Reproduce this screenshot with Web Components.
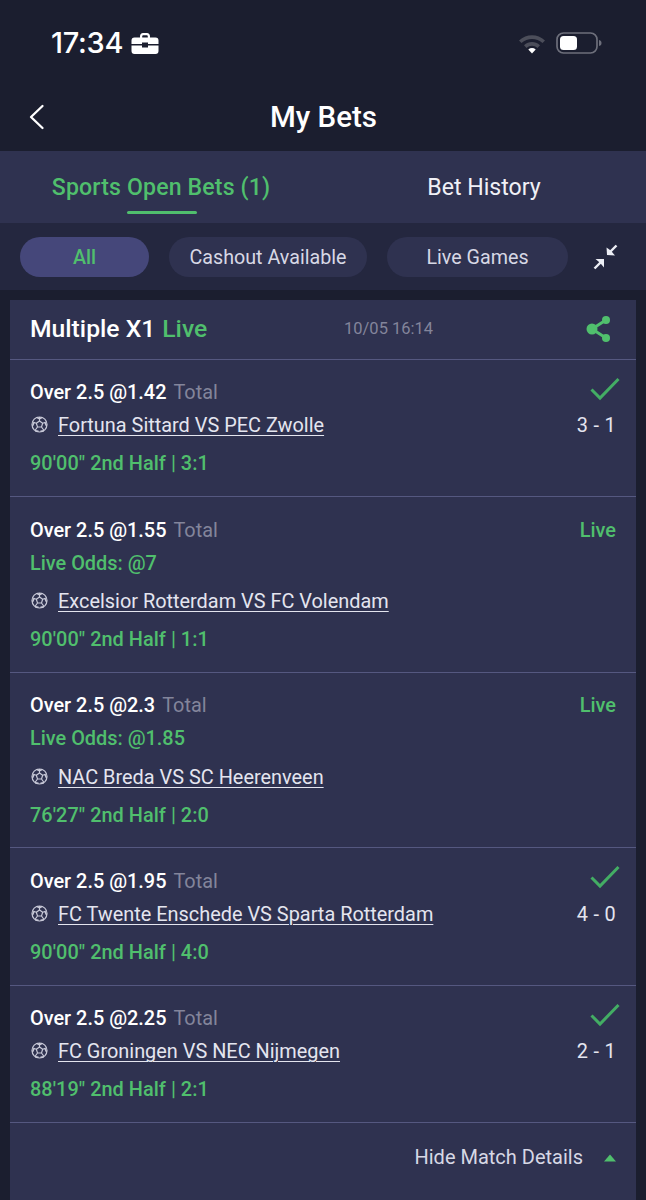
<!DOCTYPE html>
<html><head><meta charset="utf-8">
<style>
html,body{margin:0;padding:0;background:#1b1e2f;font-family:Roboto,"Liberation Sans",sans-serif;}
body{width:646px;height:1200px;overflow:hidden;}
</style></head>
<body>
<template id="t-status"><style>
:host{display:flex;justify-content:space-between;height:151px;box-sizing:border-box;flex-direction:column;background:#1b1e2f;color:#fff}
.top{display:flex;align-items:center;justify-content:space-between;height:38px;margin-top:24px;padding:0 44px 0 51px}
.time{display:flex;align-items:center;gap:8px;font:500 29px/38px Inter,Roboto,sans-serif;letter-spacing:-.3px}
.ind{display:flex;align-items:center;gap:10px}
.nav{display:grid;grid-template-columns:1fr auto 1fr;align-items:center;height:38px;margin-bottom:15px;padding:0 27px 0 28px}
h1{margin:0;font:500 29.500px/38px Roboto,sans-serif}
svg{display:block}
</style>
<div class="top"><div class="time"><span>17:34</span>
<svg width="28" height="23" viewBox="0 0 28 23"><path d="M9 6V4.200C9 2.400 10.200 1 12 1h4c1.800 0 3 1.400 3 3.200V6h-2.200V4.500c0-.800-.500-1.300-1.200-1.300h-3.200c-.700 0-1.200.500-1.200 1.300V6Z" fill="#fff"/><path d="M3.500 5.500h21A3 3 0 0 1 27.500 8.500v3.500H17v-1.500h-6V12H.5V8.500a3 3 0 0 1 3-3Z" fill="#fff"/><path d="M.5 13.500H11V15.500h6V13.500h10.500V19a3 3 0 0 1-3 3h-21a3 3 0 0 1-3-3Z" fill="#fff"/></svg>
</div>
<div class="ind">
<svg width="28" height="21" viewBox="0 0 28 21"><path d="M1 7.500C8.500.500 19.500.500 27 7.500l-2.500 2.600C18.500 4.600 9.500 4.600 3.500 10.100Z" fill="#4c4e5a"/><path d="M6 12.300C10.800 8 17.200 8 22 12.300l-2.500 2.600c-3.400-2.900-7.600-2.900-11 0Z" fill="#4c4e5a"/><path d="M10.300 16.400c2.300-1.800 5.100-1.800 7.400 0L14 20.500Z" fill="#fff"/></svg>
<svg width="46" height="22" viewBox="0 0 46 22"><rect x="1" y="1" width="40" height="20" rx="6.500" fill="none" stroke="#6d6f7b" stroke-width="1.700"/><rect x="4" y="4" width="17" height="14" rx="3.500" fill="#fff"/><path d="M43 8c2 .500 2.500 1.500 2.500 3s-.500 2.500-2.500 3Z" fill="#6d6f7b"/></svg>
</div></div>
<div class="nav"><svg width="18" height="26" viewBox="0 0 18 26"><path d="M14.500 2 3 13l11.500 11" fill="none" stroke="#fff" stroke-width="2.300" stroke-linecap="round" stroke-linejoin="round"/></svg><h1>My Bets</h1><span></span></div>
</template>

<template id="t-tabs"><style>
:host{display:flex;height:72px;background:#2f3250;font:400 23.100px/74px Roboto,sans-serif;color:#f0f0f6}
.a{position:relative;width:322px;text-align:center;color:#50bf6d;font-weight:500;letter-spacing:.15px}
.a i{position:absolute;left:127px;width:70px;bottom:9px;height:3px;border-radius:2px;background:#50bf6d}
.b{width:324px;text-align:center}
</style><div class="a">Sports Open Bets (1)<i></i></div><div class="b">Bet History</div></template>

<template id="t-filters"><style>
:host{display:flex;align-items:center;height:67px;background:#24273f;padding:0 27px 0 20px;gap:20px;box-sizing:border-box;font:400 19.700px/42px Roboto,sans-serif;color:#d7d8e5}
</style><slot></slot></template>

<template id="t-chip"><style>
:host{display:block;height:40px;border-radius:20px;background:#2f3250;text-align:center;box-sizing:border-box}
:host([active]){background:#45477a;color:#50bf6d;font-weight:500}
</style><slot></slot></template>

<template id="t-card"><style>
:host{display:block;margin:10px 10px 0;background:#2f3250}
</style><slot></slot></template>

<template id="t-head"><style>
:host{display:flex;align-items:center;height:59.600px;padding:0 24px 0 20px;box-sizing:border-box;border-bottom:1px solid #555880;position:relative;color:#fff;font:500 24.700px/34px Roboto,sans-serif}
.l{color:#50bf6d;margin-left:7px}
.d{position:absolute;left:334px;top:18px;font:400 16.500px/22px Roboto,sans-serif;color:#83859b}
svg{margin-left:auto;display:block;margin-bottom:1px}
</style><span>Multiple X1</span><span class="l">Live</span><span class="d">10/05 16:14</span>
<svg width="26" height="30" viewBox="0 0 26 30"><path d="M20 6 6 15l14 9" fill="none" stroke="#50bf6d" stroke-width="3"/><circle cx="20" cy="6" r="4" fill="#50bf6d"/><circle cx="6" cy="15" r="5.500" fill="#50bf6d"/><circle cx="20" cy="24" r="4" fill="#50bf6d"/></svg></template>

<template id="t-row"><style>
:host{display:block;padding:16.600px 20px 15.400px;border-bottom:1px solid #555880;font:400 19.900px/33px Roboto,sans-serif;color:#fff}
:host([odds]){padding-bottom:15px}
.line{display:flex;align-items:center;justify-content:space-between;height:33px}
.line.m{height:33.400px}
.sel{font-weight:500}
.sel small{font:inherit;font-weight:400;color:#83859b;margin-left:7px}
.odds{color:#50bf6d;font-weight:500;height:34px;line-height:34px;display:none}
:host([odds]) .odds{display:block}
.match{display:flex;align-items:center;gap:9px;color:#e4e5ef}
:host([odds]) .line.m{margin-top:4px;height:34px}
u{text-underline-offset:3px;text-decoration-thickness:1px}
.line.st{margin-top:4px;height:34px;color:#50bf6d;font-weight:500;letter-spacing:.04px}
.r{color:#50bf6d;font-weight:500}
.score{letter-spacing:.3px;color:#e4e5ef}
svg{display:block}
.chk{margin-top:-8px;margin-right:-5px}
</style>
<div class="line"><span class="sel"><span id="s"></span><small>Total</small></span><span id="rt"></span></div>
<div class="odds" id="o"></div>
<div class="line m"><span class="match"><svg width="19" height="19" viewBox="0 0 19 19" style="margin-top:-2px" fill="none" stroke="#c9cad9" stroke-width="1.200"><circle cx="9.500" cy="9.500" r="7.500"/><path d="M9.500 6 6.300 8.300 7.500 12h4l1.200-3.700ZM9.500 6V2M6.300 8.300 2.800 7M7.500 12l-2.200 3M11.500 12l2.200 3M12.700 8.300 16.200 7"/><path d="M7 2.500l2.500 1.200L12 2.500M2.500 11l1.500-3.200M16.500 11 15 7.800M5 15.800l3.500.500M14 15.800l-3.500.500" stroke-width="1.500"/></svg><u id="m"></u></span><span class="score" id="sc"></span></div>
<div class="line st" id="t"></div>
</template>

<template id="t-foot"><style>
:host{display:flex;align-items:flex-start;justify-content:flex-end;gap:21px;height:80px;padding:19px 20px 0 0;box-sizing:border-box;font:400 20px/30px Roboto,sans-serif;color:#d7d8e5}
svg{display:block;margin-top:12px}
</style><span>Hide Match Details</span><svg width="12" height="8" viewBox="0 0 12 8"><path d="M6 .5 12 7.500H0Z" fill="#50bf6d"/></svg></template>

<bet-header></bet-header>
<bet-tabs></bet-tabs>
<bet-filters>
<bet-chip active style="width:129px">All</bet-chip>
<bet-chip style="width:198px">Cashout Available</bet-chip>
<bet-chip style="width:181px">Live Games</bet-chip>
<svg width="27" height="26" viewBox="0 0 27 26" style="display:block;flex:none;margin-left:4px"><path d="M24.500 1.500 17.500 8.500" fill="none" stroke="#eceef5" stroke-width="2.400"/><path d="M14.500 3.500 15 11l8 .5-3-3.500-2-2Z" fill="#eceef5"/><path d="M2.500 24.500 9.500 17.500" fill="none" stroke="#eceef5" stroke-width="2.400"/><path d="M3.500 15H12v8.500l-2.500-3-3-3Z" fill="#eceef5"/></svg>
</bet-filters>
<bet-card>
<bet-head></bet-head>
<bet-row sel="Over 2.5 @1.42" match="Fortuna Sittard VS PEC Zwolle" status="90'00&quot; 2nd Half | 3:1" score="3 - 1"></bet-row>
<bet-row sel="Over 2.5 @1.55" odds="Live Odds: @7" match="Excelsior Rotterdam VS FC Volendam" status="90'00&quot; 2nd Half | 1:1"></bet-row>
<bet-row sel="Over 2.5 @2.3" odds="Live Odds: @1.85" match="NAC Breda VS SC Heerenveen" status="76'27&quot; 2nd Half | 2:0"></bet-row>
<bet-row sel="Over 2.5 @1.95" match="FC Twente Enschede VS Sparta Rotterdam" status="90'00&quot; 2nd Half | 4:0" score="4 - 0"></bet-row>
<bet-row sel="Over 2.5 @2.25" match="FC Groningen VS NEC Nijmegen" status="88'19&quot; 2nd Half | 2:1" score="2 - 1"></bet-row>
<bet-foot></bet-foot>
</bet-card>
<script>
function def(name,tpl,init){customElements.define(name,class extends HTMLElement{constructor(){super();this.attachShadow({mode:'open'}).appendChild(document.getElementById(tpl).content.cloneNode(true));}connectedCallback(){if(init)init(this,this.shadowRoot);}});}
def('bet-header','t-status');def('bet-tabs','t-tabs');def('bet-filters','t-filters');def('bet-chip','t-chip');def('bet-card','t-card');def('bet-head','t-head');def('bet-foot','t-foot');
def('bet-row','t-row',(h,r)=>{
 const g=a=>h.getAttribute(a)||'';
 r.getElementById('s').textContent=g('sel');
 r.getElementById('m').textContent=g('match');
 r.getElementById('t').textContent=g('status');
 r.getElementById('o').textContent=g('odds');
 r.getElementById('sc').textContent=g('score');
 const rt=r.getElementById('rt');
 if(h.hasAttribute('odds')){rt.textContent='Live';rt.className='r';}
 else rt.innerHTML='<svg class="chk" width="32" height="26" viewBox="0 0 32 26"><path d="M2.500 13.500 11 22 29.500 3" fill="none" stroke="#43ad64" stroke-width="3"/></svg>';
});
</script>
</body></html>
